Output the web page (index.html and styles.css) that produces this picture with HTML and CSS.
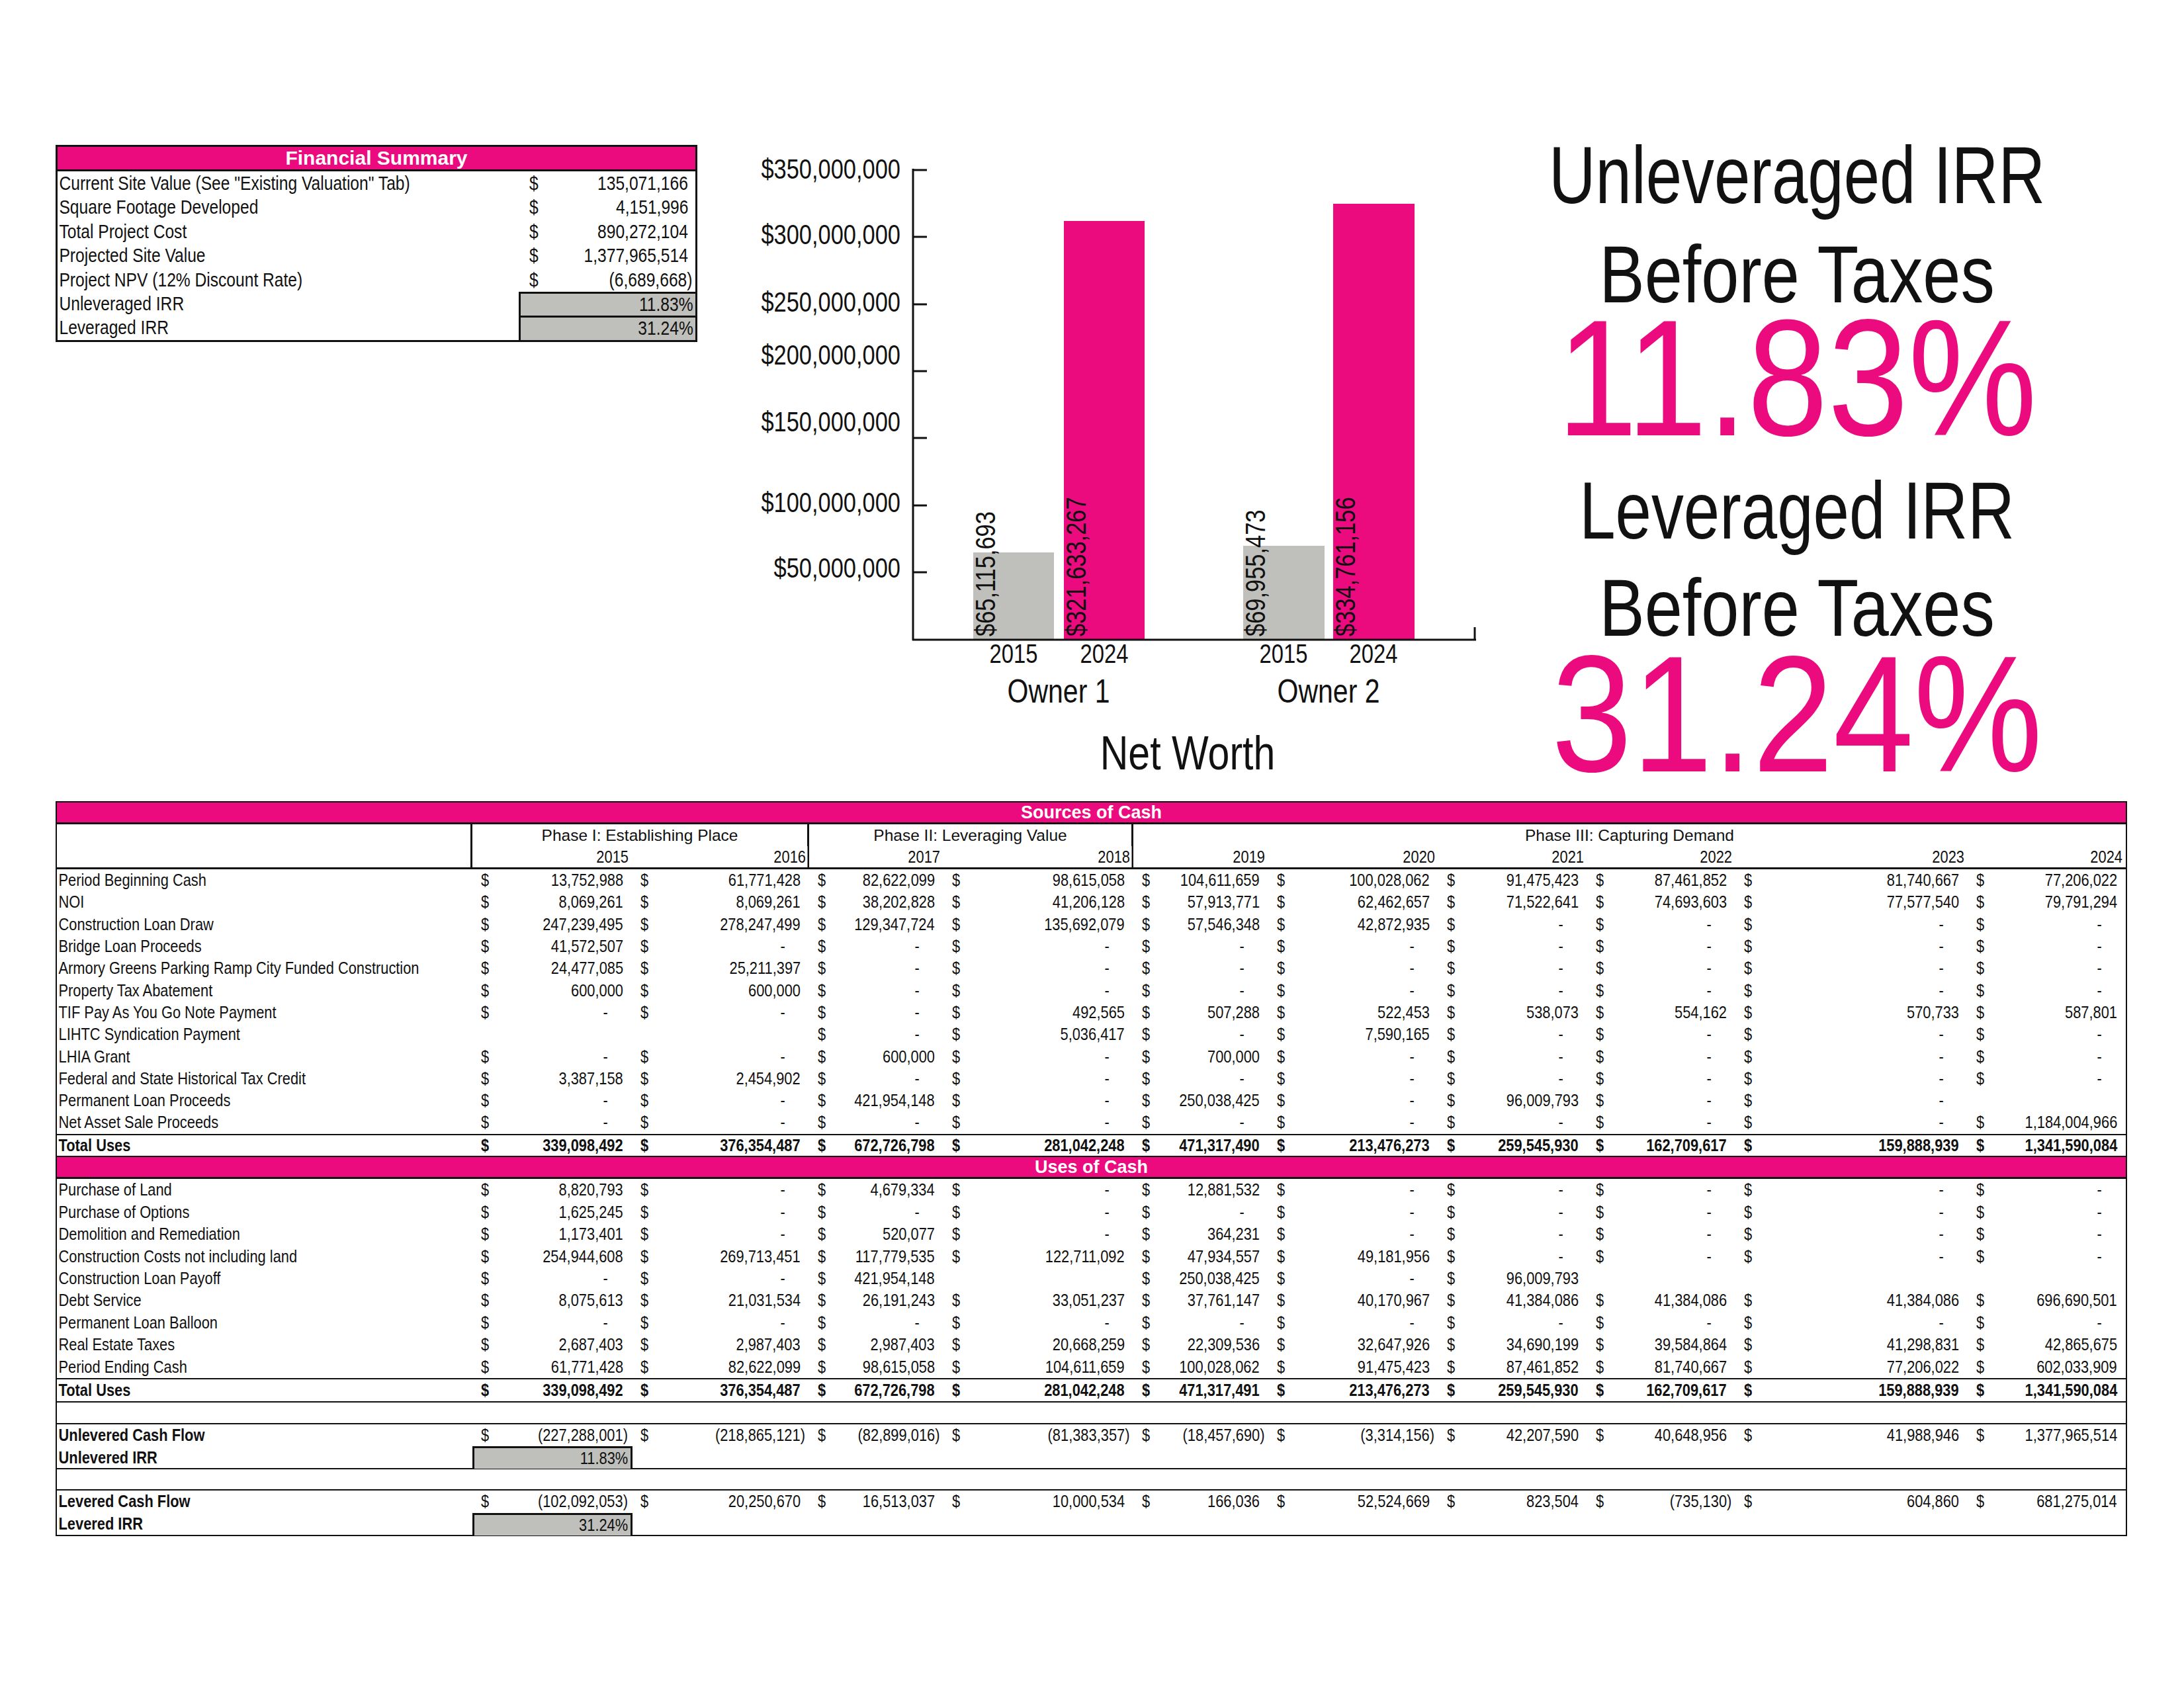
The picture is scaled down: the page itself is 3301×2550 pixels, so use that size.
FILE: index.html
```html
<!DOCTYPE html>
<html>
<head>
<meta charset="utf-8">
<link rel="stylesheet" href="styles.css">
</head>
<body>
<div class="top">
  <div class="summary">
    <div class="summary-head">Financial Summary</div>
    <div class="srow"><div class="slabel">Current Site Value (See "Existing Valuation" Tab)</div><div class="sval"><span>$</span><span>135,071,166</span></div></div>
    <div class="srow"><div class="slabel">Square Footage Developed</div><div class="sval"><span>$</span><span>4,151,996</span></div></div>
    <div class="srow"><div class="slabel">Total Project Cost</div><div class="sval"><span>$</span><span>890,272,104</span></div></div>
    <div class="srow"><div class="slabel">Projected Site Value</div><div class="sval"><span>$</span><span>1,377,965,514</span></div></div>
    <div class="srow"><div class="slabel">Project NPV (12% Discount Rate)</div><div class="sval n"><span>$</span><span>(6,689,668)</span></div></div>
    <div class="srow"><div class="slabel">Unleveraged IRR</div><div class="sval g"><span>11.83%</span></div></div>
    <div class="srow"><div class="slabel">Leveraged IRR</div><div class="sval g"><span>31.24%</span></div></div>
  </div>

  <svg class="chart" width="1130" height="1000" viewBox="1130 200 1130 1000">
    <rect class="bar-g" x="1471" y="835" width="122" height="132"/>
    <rect class="bar-p" x="1608" y="334" width="122" height="633"/>
    <rect class="bar-g" x="1879" y="825" width="123" height="142"/>
    <rect class="bar-p" x="2015" y="308" width="123" height="659"/>
    <g class="axis">
      <line x1="1380" y1="255" x2="1380" y2="968"/>
      <line x1="1379" y1="967" x2="2231" y2="967"/>
      <line x1="2229" y1="948" x2="2229" y2="968"/>
      <line x1="1380" y1="257" x2="1401" y2="257"/>
      <line x1="1380" y1="358" x2="1401" y2="358"/>
      <line x1="1380" y1="460" x2="1401" y2="460"/>
      <line x1="1380" y1="561" x2="1401" y2="561"/>
      <line x1="1380" y1="662" x2="1401" y2="662"/>
      <line x1="1380" y1="764" x2="1401" y2="764"/>
      <line x1="1380" y1="865" x2="1401" y2="865"/>
    </g>
    <g class="ylab">
      <text transform="translate(1361 270) scale(0.82 1)">$350,000,000</text>
      <text transform="translate(1361 369) scale(0.82 1)">$300,000,000</text>
      <text transform="translate(1361 471) scale(0.82 1)">$250,000,000</text>
      <text transform="translate(1361 551) scale(0.82 1)">$200,000,000</text>
      <text transform="translate(1361 652) scale(0.82 1)">$150,000,000</text>
      <text transform="translate(1361 774) scale(0.82 1)">$100,000,000</text>
      <text transform="translate(1361 873) scale(0.82 1)">$50,000,000</text>
    </g>
    <g class="vlab">
      <text transform="translate(1504 962) rotate(-90) scale(0.82 1)">$65,115,693</text>
      <text transform="translate(1641 962) rotate(-90) scale(0.82 1)">$321,633,267</text>
      <text transform="translate(1912 962) rotate(-90) scale(0.82 1)">$69,955,473</text>
      <text transform="translate(2048 962) rotate(-90) scale(0.82 1)">$334,761,156</text>
    </g>
    <g class="xlab">
      <text transform="translate(1532 1002) scale(0.82 1)">2015</text>
      <text transform="translate(1669 1002) scale(0.82 1)">2024</text>
      <text transform="translate(1940 1002) scale(0.82 1)">2015</text>
      <text transform="translate(2076 1002) scale(0.82 1)">2024</text>
    </g>
    <g class="owner">
      <text transform="translate(1600 1062) scale(0.82 1)">Owner 1</text>
      <text transform="translate(2008 1062) scale(0.82 1)">Owner 2</text>
    </g>
    <text class="title" transform="translate(1795 1163) scale(0.82 1)">Net Worth</text>
  </svg>

  <div class="irr">
    <div class="big l1">Unleveraged IRR</div>
    <div class="big l2">Before Taxes</div>
    <div class="pct l3">11.83%</div>
    <div class="big l4">Leveraged IRR</div>
    <div class="big l5">Before Taxes</div>
    <div class="pct l6">31.24%</div>
  </div>
</div>

<div class="cash">
  <div class="band">Sources of Cash</div>
  <div class="hdr">
    <div class="hl"></div>
    <div class="ph p1">Phase I: Establishing Place</div>
    <div class="ph p2">Phase II: Leveraging Value</div>
    <div class="ph p3">Phase III: Capturing Demand</div>
    <div class="yr">2015</div>
    <div class="yr div">2016</div>
    <div class="yr">2017</div>
    <div class="yr div">2018</div>
    <div class="yr">2019</div>
    <div class="yr">2020</div>
    <div class="yr">2021</div>
    <div class="yr">2022</div>
    <div class="yr">2023</div>
    <div class="yr">2024</div>
  </div>

  <div class="row"><div class="l">Period Beginning Cash</div>
    <div class="c"><span>$</span><span>13,752,988</span></div><div class="c"><span>$</span><span>61,771,428</span></div><div class="c"><span>$</span><span>82,622,099</span></div><div class="c"><span>$</span><span>98,615,058</span></div><div class="c"><span>$</span><span>104,611,659</span></div><div class="c"><span>$</span><span>100,028,062</span></div><div class="c"><span>$</span><span>91,475,423</span></div><div class="c"><span>$</span><span>87,461,852</span></div><div class="c"><span>$</span><span>81,740,667</span></div><div class="c"><span>$</span><span>77,206,022</span></div></div>
  <div class="row"><div class="l">NOI</div>
    <div class="c"><span>$</span><span>8,069,261</span></div><div class="c"><span>$</span><span>8,069,261</span></div><div class="c"><span>$</span><span>38,202,828</span></div><div class="c"><span>$</span><span>41,206,128</span></div><div class="c"><span>$</span><span>57,913,771</span></div><div class="c"><span>$</span><span>62,462,657</span></div><div class="c"><span>$</span><span>71,522,641</span></div><div class="c"><span>$</span><span>74,693,603</span></div><div class="c"><span>$</span><span>77,577,540</span></div><div class="c"><span>$</span><span>79,791,294</span></div></div>
  <div class="row"><div class="l">Construction Loan Draw</div>
    <div class="c"><span>$</span><span>247,239,495</span></div><div class="c"><span>$</span><span>278,247,499</span></div><div class="c"><span>$</span><span>129,347,724</span></div><div class="c"><span>$</span><span>135,692,079</span></div><div class="c"><span>$</span><span>57,546,348</span></div><div class="c"><span>$</span><span>42,872,935</span></div><div class="c z"><span>$</span><span>-</span></div><div class="c z"><span>$</span><span>-</span></div><div class="c z"><span>$</span><span>-</span></div><div class="c z"><span>$</span><span>-</span></div></div>
  <div class="row"><div class="l">Bridge Loan Proceeds</div>
    <div class="c"><span>$</span><span>41,572,507</span></div><div class="c z"><span>$</span><span>-</span></div><div class="c z"><span>$</span><span>-</span></div><div class="c z"><span>$</span><span>-</span></div><div class="c z"><span>$</span><span>-</span></div><div class="c z"><span>$</span><span>-</span></div><div class="c z"><span>$</span><span>-</span></div><div class="c z"><span>$</span><span>-</span></div><div class="c z"><span>$</span><span>-</span></div><div class="c z"><span>$</span><span>-</span></div></div>
  <div class="row"><div class="l">Armory Greens Parking Ramp City Funded Construction</div>
    <div class="c"><span>$</span><span>24,477,085</span></div><div class="c"><span>$</span><span>25,211,397</span></div><div class="c z"><span>$</span><span>-</span></div><div class="c z"><span>$</span><span>-</span></div><div class="c z"><span>$</span><span>-</span></div><div class="c z"><span>$</span><span>-</span></div><div class="c z"><span>$</span><span>-</span></div><div class="c z"><span>$</span><span>-</span></div><div class="c z"><span>$</span><span>-</span></div><div class="c z"><span>$</span><span>-</span></div></div>
  <div class="row"><div class="l">Property Tax Abatement</div>
    <div class="c"><span>$</span><span>600,000</span></div><div class="c"><span>$</span><span>600,000</span></div><div class="c z"><span>$</span><span>-</span></div><div class="c z"><span>$</span><span>-</span></div><div class="c z"><span>$</span><span>-</span></div><div class="c z"><span>$</span><span>-</span></div><div class="c z"><span>$</span><span>-</span></div><div class="c z"><span>$</span><span>-</span></div><div class="c z"><span>$</span><span>-</span></div><div class="c z"><span>$</span><span>-</span></div></div>
  <div class="row"><div class="l">TIF Pay As You Go Note Payment</div>
    <div class="c z"><span>$</span><span>-</span></div><div class="c z"><span>$</span><span>-</span></div><div class="c z"><span>$</span><span>-</span></div><div class="c"><span>$</span><span>492,565</span></div><div class="c"><span>$</span><span>507,288</span></div><div class="c"><span>$</span><span>522,453</span></div><div class="c"><span>$</span><span>538,073</span></div><div class="c"><span>$</span><span>554,162</span></div><div class="c"><span>$</span><span>570,733</span></div><div class="c"><span>$</span><span>587,801</span></div></div>
  <div class="row"><div class="l">LIHTC Syndication Payment</div>
    <div class="c"></div><div class="c"></div><div class="c z"><span>$</span><span>-</span></div><div class="c"><span>$</span><span>5,036,417</span></div><div class="c z"><span>$</span><span>-</span></div><div class="c"><span>$</span><span>7,590,165</span></div><div class="c z"><span>$</span><span>-</span></div><div class="c z"><span>$</span><span>-</span></div><div class="c z"><span>$</span><span>-</span></div><div class="c z"><span>$</span><span>-</span></div></div>
  <div class="row"><div class="l">LHIA Grant</div>
    <div class="c z"><span>$</span><span>-</span></div><div class="c z"><span>$</span><span>-</span></div><div class="c"><span>$</span><span>600,000</span></div><div class="c z"><span>$</span><span>-</span></div><div class="c"><span>$</span><span>700,000</span></div><div class="c z"><span>$</span><span>-</span></div><div class="c z"><span>$</span><span>-</span></div><div class="c z"><span>$</span><span>-</span></div><div class="c z"><span>$</span><span>-</span></div><div class="c z"><span>$</span><span>-</span></div></div>
  <div class="row"><div class="l">Federal and State Historical Tax Credit</div>
    <div class="c"><span>$</span><span>3,387,158</span></div><div class="c"><span>$</span><span>2,454,902</span></div><div class="c z"><span>$</span><span>-</span></div><div class="c z"><span>$</span><span>-</span></div><div class="c z"><span>$</span><span>-</span></div><div class="c z"><span>$</span><span>-</span></div><div class="c z"><span>$</span><span>-</span></div><div class="c z"><span>$</span><span>-</span></div><div class="c z"><span>$</span><span>-</span></div><div class="c z"><span>$</span><span>-</span></div></div>
  <div class="row"><div class="l">Permanent Loan Proceeds</div>
    <div class="c z"><span>$</span><span>-</span></div><div class="c z"><span>$</span><span>-</span></div><div class="c"><span>$</span><span>421,954,148</span></div><div class="c z"><span>$</span><span>-</span></div><div class="c"><span>$</span><span>250,038,425</span></div><div class="c z"><span>$</span><span>-</span></div><div class="c"><span>$</span><span>96,009,793</span></div><div class="c z"><span>$</span><span>-</span></div><div class="c z"><span>$</span><span>-</span></div><div class="c"></div></div>
  <div class="row"><div class="l">Net Asset Sale Proceeds</div>
    <div class="c z"><span>$</span><span>-</span></div><div class="c z"><span>$</span><span>-</span></div><div class="c z"><span>$</span><span>-</span></div><div class="c z"><span>$</span><span>-</span></div><div class="c z"><span>$</span><span>-</span></div><div class="c z"><span>$</span><span>-</span></div><div class="c z"><span>$</span><span>-</span></div><div class="c z"><span>$</span><span>-</span></div><div class="c z"><span>$</span><span>-</span></div><div class="c"><span>$</span><span>1,184,004,966</span></div></div>
  <div class="row tot"><div class="l">Total Uses</div>
    <div class="c"><span>$</span><span>339,098,492</span></div><div class="c"><span>$</span><span>376,354,487</span></div><div class="c"><span>$</span><span>672,726,798</span></div><div class="c"><span>$</span><span>281,042,248</span></div><div class="c"><span>$</span><span>471,317,490</span></div><div class="c"><span>$</span><span>213,476,273</span></div><div class="c"><span>$</span><span>259,545,930</span></div><div class="c"><span>$</span><span>162,709,617</span></div><div class="c"><span>$</span><span>159,888,939</span></div><div class="c"><span>$</span><span>1,341,590,084</span></div></div>

  <div class="band">Uses of Cash</div>

  <div class="row u"><div class="l">Purchase of Land</div>
    <div class="c"><span>$</span><span>8,820,793</span></div><div class="c z"><span>$</span><span>-</span></div><div class="c"><span>$</span><span>4,679,334</span></div><div class="c z"><span>$</span><span>-</span></div><div class="c"><span>$</span><span>12,881,532</span></div><div class="c z"><span>$</span><span>-</span></div><div class="c z"><span>$</span><span>-</span></div><div class="c z"><span>$</span><span>-</span></div><div class="c z"><span>$</span><span>-</span></div><div class="c z"><span>$</span><span>-</span></div></div>
  <div class="row u"><div class="l">Purchase of Options</div>
    <div class="c"><span>$</span><span>1,625,245</span></div><div class="c z"><span>$</span><span>-</span></div><div class="c z"><span>$</span><span>-</span></div><div class="c z"><span>$</span><span>-</span></div><div class="c z"><span>$</span><span>-</span></div><div class="c z"><span>$</span><span>-</span></div><div class="c z"><span>$</span><span>-</span></div><div class="c z"><span>$</span><span>-</span></div><div class="c z"><span>$</span><span>-</span></div><div class="c z"><span>$</span><span>-</span></div></div>
  <div class="row u"><div class="l">Demolition and Remediation</div>
    <div class="c"><span>$</span><span>1,173,401</span></div><div class="c z"><span>$</span><span>-</span></div><div class="c"><span>$</span><span>520,077</span></div><div class="c z"><span>$</span><span>-</span></div><div class="c"><span>$</span><span>364,231</span></div><div class="c z"><span>$</span><span>-</span></div><div class="c z"><span>$</span><span>-</span></div><div class="c z"><span>$</span><span>-</span></div><div class="c z"><span>$</span><span>-</span></div><div class="c z"><span>$</span><span>-</span></div></div>
  <div class="row u"><div class="l">Construction Costs not including land</div>
    <div class="c"><span>$</span><span>254,944,608</span></div><div class="c"><span>$</span><span>269,713,451</span></div><div class="c"><span>$</span><span>117,779,535</span></div><div class="c"><span>$</span><span>122,711,092</span></div><div class="c"><span>$</span><span>47,934,557</span></div><div class="c"><span>$</span><span>49,181,956</span></div><div class="c z"><span>$</span><span>-</span></div><div class="c z"><span>$</span><span>-</span></div><div class="c z"><span>$</span><span>-</span></div><div class="c z"><span>$</span><span>-</span></div></div>
  <div class="row u"><div class="l">Construction Loan Payoff</div>
    <div class="c z"><span>$</span><span>-</span></div><div class="c z"><span>$</span><span>-</span></div><div class="c"><span>$</span><span>421,954,148</span></div><div class="c"></div><div class="c"><span>$</span><span>250,038,425</span></div><div class="c z"><span>$</span><span>-</span></div><div class="c"><span>$</span><span>96,009,793</span></div><div class="c"></div><div class="c"></div><div class="c"></div></div>
  <div class="row u"><div class="l">Debt Service</div>
    <div class="c"><span>$</span><span>8,075,613</span></div><div class="c"><span>$</span><span>21,031,534</span></div><div class="c"><span>$</span><span>26,191,243</span></div><div class="c"><span>$</span><span>33,051,237</span></div><div class="c"><span>$</span><span>37,761,147</span></div><div class="c"><span>$</span><span>40,170,967</span></div><div class="c"><span>$</span><span>41,384,086</span></div><div class="c"><span>$</span><span>41,384,086</span></div><div class="c"><span>$</span><span>41,384,086</span></div><div class="c"><span>$</span><span>696,690,501</span></div></div>
  <div class="row u"><div class="l">Permanent Loan Balloon</div>
    <div class="c z"><span>$</span><span>-</span></div><div class="c z"><span>$</span><span>-</span></div><div class="c z"><span>$</span><span>-</span></div><div class="c z"><span>$</span><span>-</span></div><div class="c z"><span>$</span><span>-</span></div><div class="c z"><span>$</span><span>-</span></div><div class="c z"><span>$</span><span>-</span></div><div class="c z"><span>$</span><span>-</span></div><div class="c z"><span>$</span><span>-</span></div><div class="c z"><span>$</span><span>-</span></div></div>
  <div class="row u"><div class="l">Real Estate Taxes</div>
    <div class="c"><span>$</span><span>2,687,403</span></div><div class="c"><span>$</span><span>2,987,403</span></div><div class="c"><span>$</span><span>2,987,403</span></div><div class="c"><span>$</span><span>20,668,259</span></div><div class="c"><span>$</span><span>22,309,536</span></div><div class="c"><span>$</span><span>32,647,926</span></div><div class="c"><span>$</span><span>34,690,199</span></div><div class="c"><span>$</span><span>39,584,864</span></div><div class="c"><span>$</span><span>41,298,831</span></div><div class="c"><span>$</span><span>42,865,675</span></div></div>
  <div class="row u"><div class="l">Period Ending Cash</div>
    <div class="c"><span>$</span><span>61,771,428</span></div><div class="c"><span>$</span><span>82,622,099</span></div><div class="c"><span>$</span><span>98,615,058</span></div><div class="c"><span>$</span><span>104,611,659</span></div><div class="c"><span>$</span><span>100,028,062</span></div><div class="c"><span>$</span><span>91,475,423</span></div><div class="c"><span>$</span><span>87,461,852</span></div><div class="c"><span>$</span><span>81,740,667</span></div><div class="c"><span>$</span><span>77,206,022</span></div><div class="c"><span>$</span><span>602,033,909</span></div></div>
  <div class="row tot tot2"><div class="l">Total Uses</div>
    <div class="c"><span>$</span><span>339,098,492</span></div><div class="c"><span>$</span><span>376,354,487</span></div><div class="c"><span>$</span><span>672,726,798</span></div><div class="c"><span>$</span><span>281,042,248</span></div><div class="c"><span>$</span><span>471,317,491</span></div><div class="c"><span>$</span><span>213,476,273</span></div><div class="c"><span>$</span><span>259,545,930</span></div><div class="c"><span>$</span><span>162,709,617</span></div><div class="c"><span>$</span><span>159,888,939</span></div><div class="c"><span>$</span><span>1,341,590,084</span></div></div>

  <div class="row gap"></div>

  <div class="row"><div class="l b">Unlevered Cash Flow</div>
    <div class="c n"><span>$</span><span>(227,288,001)</span></div><div class="c n"><span>$</span><span>(218,865,121)</span></div><div class="c n"><span>$</span><span>(82,899,016)</span></div><div class="c n"><span>$</span><span>(81,383,357)</span></div><div class="c n"><span>$</span><span>(18,457,690)</span></div><div class="c n"><span>$</span><span>(3,314,156)</span></div><div class="c"><span>$</span><span>42,207,590</span></div><div class="c"><span>$</span><span>40,648,956</span></div><div class="c"><span>$</span><span>41,988,946</span></div><div class="c"><span>$</span><span>1,377,965,514</span></div></div>
  <div class="row irrrow"><div class="l b">Unlevered IRR</div><div class="irrc"><span>11.83%</span></div></div>

  <div class="row gap gap2"></div>

  <div class="row"><div class="l b">Levered Cash Flow</div>
    <div class="c n"><span>$</span><span>(102,092,053)</span></div><div class="c"><span>$</span><span>20,250,670</span></div><div class="c"><span>$</span><span>16,513,037</span></div><div class="c"><span>$</span><span>10,000,534</span></div><div class="c"><span>$</span><span>166,036</span></div><div class="c"><span>$</span><span>52,524,669</span></div><div class="c"><span>$</span><span>823,504</span></div><div class="c n"><span>$</span><span>(735,130)</span></div><div class="c"><span>$</span><span>604,860</span></div><div class="c"><span>$</span><span>681,275,014</span></div></div>
  <div class="row irrrow last"><div class="l b">Levered IRR</div><div class="irrc"><span>31.24%</span></div></div>
</div>
</body>
</html>
```

FILE: styles.css
```css
* { box-sizing: border-box; }

html, body {
  margin: 0;
  padding: 0;
  background: #ffffff;
}

body {
  width: 3301px;
  height: 2550px;
  overflow: hidden;
  font-family: "Liberation Sans", Arial, sans-serif;
  color: #111111;
}

/* ---------- top area ---------- */
.top {
  display: flex;
  align-items: flex-start;
  height: 1211px;
}

.summary {
  flex: none;
  margin: 219px 0 0 84px;
  width: 970px;
  border: 3px solid #111;
  font-size: 30px;
}

.summary-head {
  height: 37px;
  border-bottom: 3px solid #111;
  background: #ec0b7f;
  color: #fff;
  font-weight: 700;
  font-size: 30px;
  line-height: 34px;
  text-align: center;
}

.srow {
  display: grid;
  grid-template-columns: 697px 1fr;
  height: 36.4px;
  line-height: 36px;
}

.slabel {
  padding-left: 3px;
  white-space: nowrap;
  transform: scaleX(0.82);
  transform-origin: left center;
}

.sval {
  display: flex;
  justify-content: space-between;
  padding: 0 11px 0 16px;
  white-space: nowrap;
}

.sval span {
  display: inline-block;
  transform: scaleX(0.82);
}

.sval span:first-child { transform-origin: left center; }
.sval span:last-child { transform-origin: right center; }

.sval.n { padding-right: 5px; }

.sval.g {
  justify-content: flex-end;
  background: #bfbfbb;
  border-left: 3px solid #111;
  border-top: 3px solid #111;
  padding-right: 3px;
  line-height: 32px;
}

/* ---------- chart ---------- */
.chart {
  flex: none;
  margin: 200px 0 0 76px;
  display: block;
}

.bar-g { fill: #bfbfbb; }
.bar-p { fill: #ec0b7f; }

.axis line {
  stroke: #111;
  stroke-width: 3;
}

.ylab text {
  font-size: 42px;
  text-anchor: end;
  fill: #111;
}

.vlab text {
  font-size: 42px;
  fill: #111;
}

.xlab text {
  font-size: 40px;
  text-anchor: middle;
  fill: #111;
}

.owner text {
  font-size: 50px;
  text-anchor: middle;
  fill: #111;
}

.title {
  font-size: 72px;
  text-anchor: middle;
  fill: #111;
}

/* ---------- IRR headline ---------- */
.irr {
  flex: none;
  margin: 203px 0 0 40px;
  width: 832px;
  text-align: center;
  white-space: nowrap;
}

.big,
.pct {
  margin-left: -250px;
  margin-right: -250px;
  transform-origin: center center;
}

.big {
  font-size: 123px;
  line-height: 123px;
  color: #111;
  transform: scaleX(0.795);
}

.l2,
.l5 { transform: scaleX(0.835); }

.pct {
  font-size: 250px;
  line-height: 180px;
  color: #ec0b7f;
  transform: scaleX(0.875);
}

.l2 { margin-top: 27px; }
.l3 { margin-top: 5.5px; }
.l4 { margin-top: 48.5px; }
.l5 { margin-top: 24px; }
.l6 { margin-top: 9.5px; }

/* ---------- cash table ---------- */
.cash {
  margin-left: 84px;
  width: 3131px;
  border: 2px solid #111;
  font-size: 26px;
}

.band {
  height: 33px;
  background: #ec0b7f;
  border-bottom: 3px solid #111;
  color: #fff;
  font-weight: 700;
  font-size: 27px;
  line-height: 30px;
  text-align: center;
}

.hdr,
.row {
  display: grid;
  grid-template-columns: 628px 241px 268px 203px 287px 204px 257px 225px 224px 351px 239px;
}

.hdr {
  grid-template-rows: 33px 32px;
  border-bottom: 3px solid #111;
}

.hl {
  grid-column: 1;
  grid-row: 1 / 3;
  border-right: 3px solid #111;
}

.ph {
  grid-row: 1;
  text-align: center;
  font-size: 24.5px;
  line-height: 34px;
  white-space: nowrap;
}

.p1 { grid-column: 2 / 4; border-right: 3px solid #111; }
.p2 { grid-column: 4 / 6; border-right: 3px solid #111; }
.p3 { grid-column: 6 / 12; }

.yr {
  grid-row: 2;
  text-align: right;
  padding-right: 6px;
  line-height: 32px;
  transform: scaleX(0.84);
  transform-origin: right center;
}

.yr.div {
  border-right: 3px solid #111;
  padding-right: 3px;
}

.row {
  height: 33.3px;
  align-items: center;
}

.row.u { height: 33.45px; }

.l {
  padding-left: 3px;
  white-space: nowrap;
  transform: scaleX(0.84);
  transform-origin: left center;
}

.b { font-weight: 700; }

.c {
  display: flex;
  justify-content: space-between;
  padding: 0 13px;
  white-space: nowrap;
}

.c span {
  display: inline-block;
  transform: scaleX(0.84);
}

.c span:first-child { transform-origin: left center; }
.c span:last-child { transform-origin: right center; }

.c.z { padding-right: 36px; }
.c.n { padding-right: 6px; }

.tot {
  height: 35.5px;
  border-top: 2px solid #111;
  border-bottom: 2px solid #111;
  font-weight: 700;
}

.tot2 { height: 37px; }

.gap {
  height: 33px;
  border-bottom: 2px solid #111;
}

.gap2 { height: 32px; }

.irrrow {
  height: 35px;
  border-bottom: 2px solid #111;
  align-items: stretch;
}

.irrrow.last {
  height: 33px;
  border-bottom: 0;
}

.irrrow .l {
  align-self: center;
}

.irrc {
  display: flex;
  align-items: center;
  justify-content: flex-end;
  padding-right: 4px;
  background: #bfbfbb;
  border: 3px solid #111;
  border-bottom: 0;
  margin-right: -1px;
}

.irrc span {
  display: inline-block;
  transform: scaleX(0.84);
  transform-origin: right center;
}
```
